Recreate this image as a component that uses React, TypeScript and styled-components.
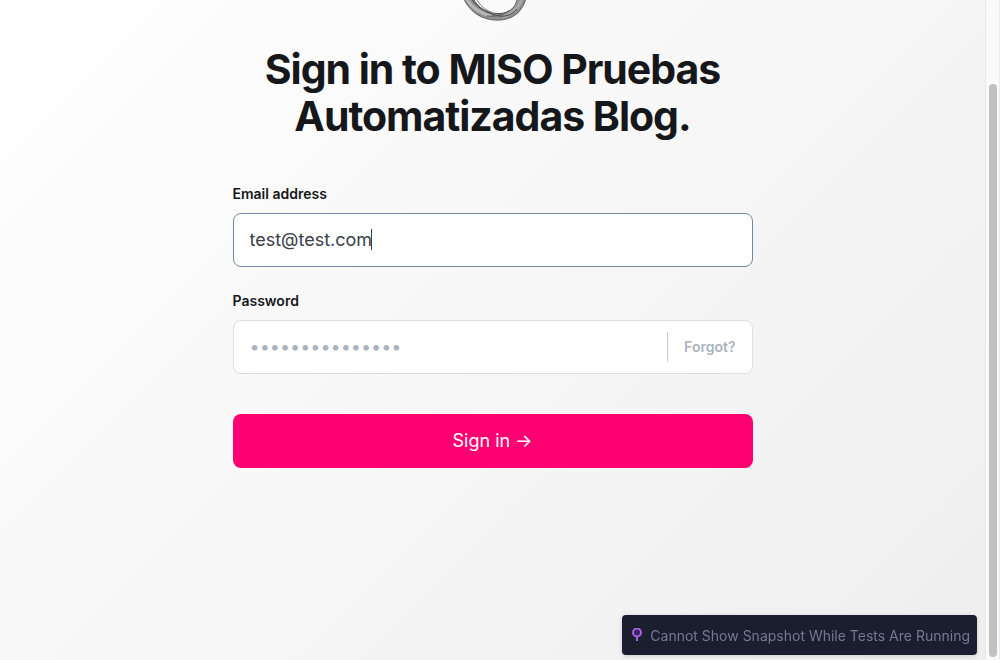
import React from "react";
import styled, { createGlobalStyle } from "styled-components";

const GlobalStyle = createGlobalStyle`
  * { box-sizing: border-box; }
  html, body { margin: 0; }
  body {
    font-family: Inter, "Liberation Sans", sans-serif;
    color: #15171a;
    overflow: hidden;
  }
  button, input { font-family: inherit; }
`;

const Page = styled.div`
  display: flex;
  min-height: 100vh;
  background: linear-gradient(135deg, #ffffff 0%, #eeeeee 100%);
`;

const Main = styled.main`
  flex: 1;
  display: flex;
  flex-direction: column;
  align-items: center;
`;

const ScrollTrack = styled.div`
  display: flex;
  flex-direction: column;
  width: 15px;
  padding: 84px 2px 3px 3px;
  background: #fafafa;
  border-left: 1px solid #e8e8e8;
  border-right: 1px solid #ededed;
`;

const ScrollThumb = styled.div`
  flex: 1;
  border-radius: 4px;
  background: #c1c1c1;
`;

const Form = styled.form`
  display: flex;
  flex-direction: column;
  width: 100%;
  max-width: 520px;
`;

const Header = styled.header`
  display: flex;
  flex-direction: column;
  align-items: center;
  gap: 24px;
  margin-bottom: 43px;
`;

const Logo = styled.svg`
  display: block;
  width: 68px;
  height: 22px;
`;

const Title = styled.h1`
  margin: 0;
  font-size: 41px;
  line-height: 47px;
  font-weight: 700;
  letter-spacing: -0.025em;
  text-align: center;
`;

const Field = styled.div<{ $last?: boolean }>`
  display: flex;
  flex-direction: column;
  gap: 9px;
  margin-bottom: ${(p) => (p.$last ? 40 : 23)}px;
`;

const Label = styled.label`
  font-size: 14px;
  line-height: 21px;
  font-weight: 600;
`;

const InputFrame = styled.div<{ $focused?: boolean }>`
  position: relative;
  display: flex;
  align-items: center;
  height: 54px;
  border: 1px solid ${(p) => (p.$focused ? "#738a9f" : "#dddedf")};
  border-radius: 8px;
  background: #ffffff;
`;

const Input = styled.input`
  flex: 1;
  min-width: 0;
  height: 100%;
  padding: 0 16px 2px;
  border: 0;
  border-radius: 8px;
  outline: none;
  background: transparent;
  color: #394047;
  font-size: 18px;

  &::placeholder {
    color: #abb4be;
    opacity: 1;
  }
`;

const Caret = styled.span`
  position: absolute;
  left: 137px;
  top: 15px;
  width: 1px;
  height: 21px;
  background: #394047;
`;

const ForgotButton = styled.button`
  height: 30px;
  padding: 0 16px 2px;
  border: 0;
  border-left: 1px solid #c8ccd0;
  background: transparent;
  color: #abb4be;
  font-size: 14px;
  font-weight: 600;
`;

const SubmitButton = styled.button`
  height: 54px;
  padding: 0 16px 2px;
  border: 0;
  border-radius: 8px;
  background: #ff0073;
  color: #ffffff;
  font-size: 18px;
  font-weight: 400;
`;

const Toast = styled.div`
  position: fixed;
  right: 23px;
  bottom: 5px;
  display: flex;
  align-items: center;
  gap: 8px;
  height: 40px;
  padding: 0 7px 0 10px;
  border-radius: 4px;
  background: #1b1e2e;
  color: #747994;
  font-size: 14px;
  white-space: nowrap;
  box-shadow: 0 1px 4px rgba(0, 0, 0, 0.15);
`;

const PinIcon = styled.svg`
  display: block;
  width: 10px;
  height: 14px;
`;

export default function App() {
  return (
    <Page>
      <GlobalStyle />
      <Main>
        <Form onSubmit={(e) => e.preventDefault()}>
          <Header>
            <Logo viewBox="0 0 68 22" aria-hidden="true" fill="none">
              <path
                d="M4 -2C10 12 22 20.500 38 20.500C54 20.500 64 12 67.500 -2H59C57 9 49 14 41 14C30 14 19 10 14 -2Z"
                fill="#919191"
              />
              <path d="M7 -2C13 9 22 14 33 16" stroke="#b8b8b8" strokeWidth="3" />
              <path d="M63 -2C60 8 54 14 44 17" stroke="#a9a9a9" strokeWidth="3" />
              <path d="M4.500 -2C11 12 23 20 38 20C54 20 63 12 67 -2" stroke="#6c6c6c" />
              <path d="M12 -2C17 7 27 13 40 16C48 17 54 14 58 9" stroke="#444444" />
              <path d="M14 -2C19 9 30 14 41 13.500C51 13 57 7 58.500 -2" stroke="#505050" />
              <path d="M17 -2C20 5 26 10 33 12.500" stroke="#777777" />
              <path d="M28 16C38 17 46 14 51 10" stroke="#555555" />
            </Logo>
            <Title>
              Sign in to MISO Pruebas
              <br />
              Automatizadas Blog.
            </Title>
          </Header>
          <Field>
            <Label htmlFor="email">Email address</Label>
            <InputFrame $focused>
              <Input id="email" type="email" defaultValue="test@test.com" />
              <Caret />
            </InputFrame>
          </Field>
          <Field $last>
            <Label htmlFor="password">Password</Label>
            <InputFrame>
              <Input id="password" type="password" placeholder="•••••••••••••••" />
              <ForgotButton type="button">Forgot?</ForgotButton>
            </InputFrame>
          </Field>
          <SubmitButton type="submit">Sign in →</SubmitButton>
        </Form>
      </Main>
      <ScrollTrack>
        <ScrollThumb />
      </ScrollTrack>
      <Toast role="status">
        <PinIcon viewBox="0 0 10 14" aria-hidden="true">
          <path d="M5 8v5" stroke="#a364dc" strokeWidth="2" />
          <circle cx="5" cy="4.500" r="4" fill="#3d2168" stroke="#a364dc" strokeWidth="2" />
        </PinIcon>
        Cannot Show Snapshot While Tests Are Running
      </Toast>
    </Page>
  );
}
